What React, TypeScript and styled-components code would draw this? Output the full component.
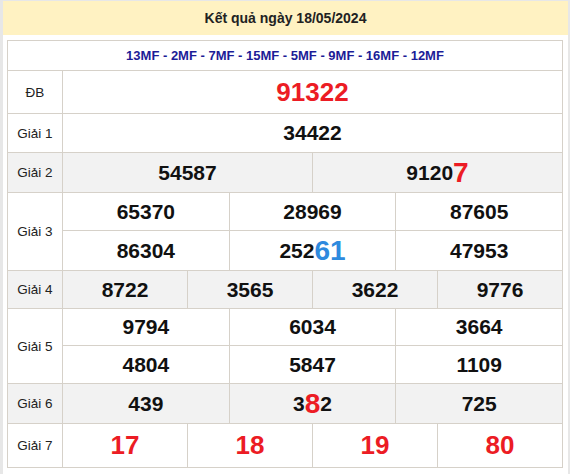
import React from 'react';
import styled, { createGlobalStyle } from 'styled-components';

const Global = createGlobalStyle`
  html, body { margin: 0; padding: 0; background: #e7e7e7; }
  body { font-family: "Liberation Sans", Arial, sans-serif; }
`;

const BORDER = '#d6d1c9';

const Page = styled.div`
  margin: 1px 2px 0 3px;
  background: #fff;
  min-height: 473px;
`;

const Header = styled.div`
  height: 34px;
  background: #fff2c2;
  display: flex;
  align-items: center;
  justify-content: center;
  font-size: 14px;
  font-weight: bold;
  color: #222;
`;

const Table = styled.div`
  margin: 5px 5px 0 4px;
  border-top: 1px solid ${BORDER};
  border-left: 1px solid ${BORDER};
`;

const Row = styled.div<{ $alt?: boolean }>`
  display: flex;
  background: ${(p) => (p.$alt ? '#f2f2f2' : '#fff')};
`;

const SubHeader = styled.div`
  flex: 1;
  height: 30px;
  box-sizing: border-box;
  border-right: 1px solid ${BORDER};
  border-bottom: 1px solid ${BORDER};
  display: flex;
  align-items: center;
  justify-content: center;
  font-size: 13px;
  font-weight: bold;
  color: #1c1c97;
`;

const Label = styled.div`
  flex: none;
  width: 55px;
  box-sizing: border-box;
  border-right: 1px solid ${BORDER};
  border-bottom: 1px solid ${BORDER};
  display: flex;
  align-items: center;
  justify-content: center;
  font-size: 13.5px;
  color: #222;
`;

const Lines = styled.div`
  flex: 1;
  display: flex;
  flex-direction: column;
`;

const Line = styled.div<{ $cols: number; $h: number }>`
  display: grid;
  grid-template-columns: repeat(${(p) => p.$cols}, 1fr);
  height: ${(p) => p.$h}px;
`;

const Cell = styled.div<{ $big?: boolean; $red?: boolean }>`
  box-sizing: border-box;
  border-right: 1px solid ${BORDER};
  border-bottom: 1px solid ${BORDER};
  display: flex;
  align-items: center;
  justify-content: center;
  font-weight: bold;
  font-size: ${(p) => (p.$big ? '26px' : '21px')};
  color: ${(p) => (p.$red ? '#ec1c24' : '#111')};
  white-space: nowrap;
`;

const Hi = styled.span<{ $tone: 'red' | 'blue' }>`
  font-size: 28px;
  color: ${(p) => (p.$tone === 'red' ? '#ec1c24' : '#2e8ade')};
`;

type Seg = string | { t: string; tone: 'red' | 'blue' };
type Prize = {
  label: string;
  alt?: boolean;
  big?: boolean;
  red?: boolean;
  lines: { h: number; nums: Seg[][] }[];
};

const prizes: Prize[] = [
  { label: 'ĐB', big: true, red: true, lines: [{ h: 43, nums: [['91322']] }] },
  { label: 'Giải 1', lines: [{ h: 39, nums: [['34422']] }] },
  { label: 'Giải 2', alt: true, lines: [{ h: 40, nums: [['54587'], ['9120', { t: '7', tone: 'red' }]] }] },
  {
    label: 'Giải 3',
    lines: [
      { h: 38, nums: [['65370'], ['28969'], ['87605']] },
      { h: 40, nums: [['86304'], ['252', { t: '61', tone: 'blue' }], ['47953']] },
    ],
  },
  { label: 'Giải 4', alt: true, lines: [{ h: 38, nums: [['8722'], ['3565'], ['3622'], ['9776']] }] },
  {
    label: 'Giải 5',
    lines: [
      { h: 37, nums: [['9794'], ['6034'], ['3664']] },
      { h: 38, nums: [['4804'], ['5847'], ['1109']] },
    ],
  },
  { label: 'Giải 6', alt: true, lines: [{ h: 40, nums: [['439'], ['3', { t: '8', tone: 'red' }, '2'], ['725']] }] },
  { label: 'Giải 7', big: true, red: true, lines: [{ h: 44, nums: [['17'], ['18'], ['19'], ['80']] }] },
];

export default function App() {
  return (
    <>
      <Global />
      <Page>
        <Header>Kết quả ngày 18/05/2024</Header>
        <Table>
          <Row>
            <SubHeader>13MF - 2MF - 7MF - 15MF - 5MF - 9MF - 16MF - 12MF</SubHeader>
          </Row>
          {prizes.map((p) => (
            <Row key={p.label} $alt={p.alt}>
              <Label>{p.label}</Label>
              <Lines>
                {p.lines.map((l, i) => (
                  <Line key={i} $cols={l.nums.length} $h={l.h}>
                    {l.nums.map((n, j) => (
                      <Cell key={j} $big={p.big} $red={p.red}>
                        {n.map((s, k) =>
                          typeof s === 'string' ? (
                            <React.Fragment key={k}>{s}</React.Fragment>
                          ) : (
                            <Hi key={k} $tone={s.tone}>
                              {s.t}
                            </Hi>
                          )
                        )}
                      </Cell>
                    ))}
                  </Line>
                ))}
              </Lines>
            </Row>
          ))}
        </Table>
      </Page>
    </>
  );
}
